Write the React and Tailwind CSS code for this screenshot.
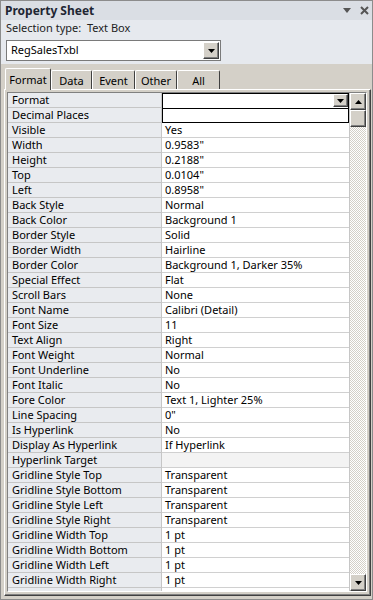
import React from 'react';

const rows = [
  ['Format', ''],
  ['Decimal Places', ''],
  ['Visible', 'Yes'],
  ['Width', '0.9583"'],
  ['Height', '0.2188"'],
  ['Top', '0.0104"'],
  ['Left', '0.8958"'],
  ['Back Style', 'Normal'],
  ['Back Color', 'Background 1'],
  ['Border Style', 'Solid'],
  ['Border Width', 'Hairline'],
  ['Border Color', 'Background 1, Darker 35%'],
  ['Special Effect', 'Flat'],
  ['Scroll Bars', 'None'],
  ['Font Name', 'Calibri (Detail)'],
  ['Font Size', '11'],
  ['Text Align', 'Right'],
  ['Font Weight', 'Normal'],
  ['Font Underline', 'No'],
  ['Font Italic', 'No'],
  ['Fore Color', 'Text 1, Lighter 25%'],
  ['Line Spacing', '0"'],
  ['Is Hyperlink', 'No'],
  ['Display As Hyperlink', 'If Hyperlink'],
  ['Hyperlink Target', ''],
  ['Gridline Style Top', 'Transparent'],
  ['Gridline Style Bottom', 'Transparent'],
  ['Gridline Style Left', 'Transparent'],
  ['Gridline Style Right', 'Transparent'],
  ['Gridline Width Top', '1 pt'],
  ['Gridline Width Bottom', '1 pt'],
  ['Gridline Width Left', '1 pt'],
  ['Gridline Width Right', '1 pt'],
  ['Top Margin', '0"'],
];

const tabs = ['Format', 'Data', 'Event', 'Other', 'All'];
const tabWidths = ['w-[46px]', 'w-[41px]', 'w-[43px]', 'w-[42px]', 'w-[43px]'];

const Arrow = ({ up }) => (
  <svg width="7" height="4" viewBox="0 0 7 4">
    <path d={up ? 'M0 4 L3.5 0 L7 4 Z' : 'M0 0 L7 0 L3.5 4 Z'} fill="#000" />
  </svg>
);

const RaisedBtn = ({ className, children }) => (
  <div
    className={`flex items-center justify-center bg-[#d4d0c8] border border-t-white border-l-white border-r-[#404040] border-b-[#404040] shadow-[inset_-1px_-1px_#808080] ${className}`}
  >
    {children}
  </div>
);

export default function App() {
  return (
    <div
      className="w-[373px] h-[600px] bg-[#e6e9ee] border border-[#8c8c8c] flex flex-col overflow-hidden text-black"
      style={{ fontFamily: '"Noto Sans", "Open Sans", sans-serif' }}
    >
      {/* title */}
      <div className="h-[19px] bg-[#dadee4] flex items-center justify-between pl-[4px] pr-[3px] shrink-0">
        <span className="text-[12px] font-bold text-[#1e2633] leading-none">Property Sheet</span>
        <div className="flex items-center gap-[9px]">
          <svg width="8" height="5" viewBox="0 0 8 5">
            <path d="M0 0 L8 0 L4 5 Z" fill="#555" />
          </svg>
          <svg width="9" height="9" viewBox="0 0 9 9">
            <path d="M1 1 L8 8 M8 1 L1 8" stroke="#555" strokeWidth="2" />
          </svg>
        </div>
      </div>

      <div className="h-[16px] pl-[5px] flex items-center text-[11px] text-[#222] shrink-0">
        Selection type:&nbsp;&nbsp;Text Box
      </div>

      {/* combo */}
      <div className="mt-[4px] ml-[5px] w-[215px] h-[21px] bg-white border border-[#7a7a7a] flex items-center shrink-0">
        <span className="flex-1 pl-[4px] text-[11px]">RegSalesTxbl</span>
        <RaisedBtn className="w-[16px] h-[17px] mr-[1px]">
          <Arrow />
        </RaisedBtn>
      </div>

      {/* tabs area */}
      <div className="mt-[3px] flex-1 bg-[#d4d0c8] flex flex-col pl-[3px] pr-[1px] pb-[3px] min-h-0">
        <div className="h-[25px] flex items-end shrink-0 pl-[1px]">
          {tabs.map((t, i) => (
            <div
              key={t}
              className={`${tabWidths[i]} ${
                i === 0 ? 'h-[22px] relative z-10 bg-[#d4d0c8] -mb-[1px] pb-[1px]' : 'h-[19px]'
              } border-l border-t border-t-white border-l-white border-r border-r-[#404040] rounded-t-[2px] flex items-center justify-center text-[11px] leading-none shrink-0`}
            >
              {t}
            </div>
          ))}
        </div>

        <div className="flex-1 border border-t-white border-l-white border-r-[#404040] border-b-[#404040] shadow-[inset_-1px_-1px_#808080] p-[2px] pr-[3px] pb-[3px] min-h-0 flex">
          <div className="flex-1 border border-t-[#808080] border-l-[#808080] border-r-white border-b-white flex min-h-0 overflow-hidden">
            <div className="flex-1 overflow-hidden bg-white">
              {rows.map(([k, v], i) => (
                <div key={k} className="h-[15px] flex text-[11px] leading-[14px]">
                  <div className="w-[154px] shrink-0 bg-[#e9ebef] border-b border-r border-[#c6c6c6] pl-[4px] whitespace-nowrap overflow-hidden">
                    {k}
                  </div>
                  {i === 0 ? (
                    <div className="flex-1 border-l border-t border-r border-black pl-[2px] flex justify-end items-start">
                      <RaisedBtn className="w-[15px] h-[13px]">
                        <Arrow />
                      </RaisedBtn>
                    </div>
                  ) : i === 1 ? (
                    <div className="flex-1 border border-black" />
                  ) : (
                    <div
                      className={`flex-1 border-b border-[#d0d0d0] pl-[3px] whitespace-nowrap overflow-hidden ${
                        k === 'Hyperlink Target' ? 'bg-[#f3f3f3]' : 'bg-white'
                      }`}
                    >
                      {v}
                    </div>
                  )}
                </div>
              ))}
            </div>

            {/* scrollbar */}
            <div className="w-[17px] shrink-0 flex flex-col bg-[repeating-conic-gradient(#d4d0c8_0%_25%,#ffffff_0%_50%)] bg-[length:2px_2px] border-l border-[#c6c6c6]">
              <RaisedBtn className="h-[17px]">
                <Arrow up />
              </RaisedBtn>
              <RaisedBtn className="h-[17px]" />
              <div className="flex-1" />
              <RaisedBtn className="h-[17px]">
                <Arrow />
              </RaisedBtn>
            </div>
          </div>
        </div>
      </div>
    </div>
  );
}
